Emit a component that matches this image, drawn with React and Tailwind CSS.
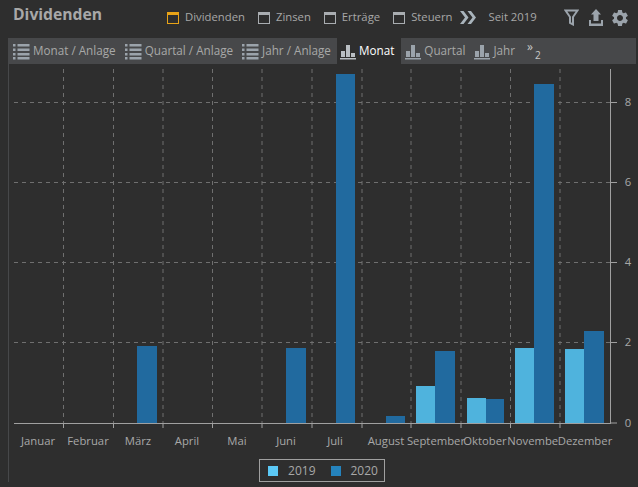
import React from 'react';
import { MdSettings } from 'react-icons/md';

const filters = [
  { label: 'Dividenden', active: true },
  { label: 'Zinsen' },
  { label: 'Erträge' },
  { label: 'Steuern' },
];

const tabs = [
  { label: 'Monat / Anlage', icon: 'list' },
  { label: 'Quartal / Anlage', icon: 'list' },
  { label: 'Jahr / Anlage', icon: 'list' },
  { label: 'Monat', icon: 'bars', active: true },
  { label: 'Quartal', icon: 'bars' },
  { label: 'Jahr', icon: 'bars' },
];

const months = ['Januar', 'Februar', 'März', 'April', 'Mai', 'Juni', 'Juli', 'August', 'September', 'Oktober', 'November', 'Dezember'];
const labelX = [38, 88, 138, 187, 237, 286, 335, 386, 436, 485, 535, 585];
const gridX = [63.5, 113.5, 163, 212.5, 262, 312, 362, 411, 461, 510.5, 560];
const tickY = [{ v: 8, y: 102 }, { v: 6, y: 182 }, { v: 4, y: 262 }, { v: 2, y: 342 }];
const BASE = 423;

// x, width, top of every bar in page pixels
const bars = [
  { x: 137, w: 20, top: 346, c: '#216a9f' },
  { x: 286, w: 20, top: 348, c: '#216a9f' },
  { x: 336, w: 19, top: 74, c: '#216a9f' },
  { x: 386, w: 19, top: 416, c: '#216a9f' },
  { x: 416, w: 19, top: 386, c: '#4fb3dd' },
  { x: 435, w: 20, top: 351, c: '#216a9f' },
  { x: 467, w: 19, top: 398, c: '#4fb3dd' },
  { x: 486, w: 18, top: 399, c: '#216a9f' },
  { x: 515, w: 19, top: 348, c: '#4fb3dd' },
  { x: 534, w: 20, top: 84, c: '#216a9f' },
  { x: 565, w: 19, top: 349, c: '#4fb3dd' },
  { x: 584, w: 20, top: 331, c: '#216a9f' },
];

function ListIcon() {
  return (
    <svg width="17" height="17" viewBox="0 0 17 17" className="shrink-0" fill="#9ba3ab">
      <rect x="0" y="1" width="2.5" height="2.5" />
      <rect x="0" y="5.5" width="2.5" height="2.5" />
      <rect x="0" y="10" width="2.5" height="2.5" />
      <rect x="0" y="14" width="2.5" height="2.5" />
      <rect x="4.5" y="1" width="12" height="2.5" />
      <rect x="4.5" y="5.5" width="12" height="2.5" />
      <rect x="4.5" y="10" width="12" height="2.5" />
      <rect x="4.5" y="14" width="12" height="2.5" />
    </svg>
  );
}

function BarsIcon({ color }) {
  return (
    <svg width="16" height="17" viewBox="0 0 16 17" className="shrink-0" fill={color}>
      <rect x="1" y="8" width="4" height="6" />
      <rect x="6" y="2" width="4" height="12" />
      <rect x="11" y="10" width="4" height="4" />
      <rect x="0" y="15" width="16" height="1.5" />
    </svg>
  );
}

function WindowBox({ active }) {
  return (
    <span className={`w-3 h-3 shrink-0 border border-solid border-t-[3px] ${active ? 'border-[#e8a317]' : 'border-[#a9adb1]'}`} />
  );
}

function Chart() {
  return (
    <svg width="638" height="388" viewBox="0 64 638 388" className="block">
      {/* grid */}
      {gridX.map(x => (
        <line key={x} x1={x} x2={x} y1="69" y2={BASE} stroke="#6f6f6f" strokeDasharray="4 4" />
      ))}
      {tickY.map(t => (
        <line key={t.v} x1="14" x2="610" y1={t.y + 0.5} y2={t.y + 0.5} stroke="#6f6f6f" strokeDasharray="4 4" />
      ))}
      {/* bars */}
      {bars.map(b => (
        <rect key={b.x} x={b.x} y={b.top} width={b.w} height={BASE - b.top} fill={b.c} />
      ))}
      {/* axes */}
      <line x1="14" x2="610" y1={BASE + 0.5} y2={BASE + 0.5} stroke="#a0a0a0" />
      <line x1="610.5" x2="610.5" y1="69" y2={BASE + 1} stroke="#a0a0a0" />
      {gridX.map(x => (
        <line key={x} x1={x} x2={x} y1={BASE} y2={BASE + 5} stroke="#a0a0a0" />
      ))}
      {[...tickY, { v: 0, y: 422.5 }].map(t => (
        <g key={t.v}>
          <line x1="610" x2="617" y1={t.y + 0.5} y2={t.y + 0.5} stroke="#a0a0a0" />
          <text x="628" y={t.y + 4} textAnchor="middle" fontSize="11.3" fill="#a8a8a8">{t.v}</text>
        </g>
      ))}
      {months.map((m, i) => (
        <g key={m}>
          {m === 'Dezember' && <rect x="559" y="432" width="52" height="18" fill="#2e2e2e" />}
          <text x={labelX[i]} y="445" textAnchor="middle" fontSize="11.3" fill="#a8a8a8">{m}</text>
        </g>
      ))}
    </svg>
  );
}

export default function App() {
  return (
    <div className="w-[638px] h-[487px] overflow-hidden bg-[#2e2e2e] text-[#a8a8a8] text-[11.3px]" style={{ fontFamily: '"Open Sans", sans-serif' }}>
      {/* header */}
      <div className="h-[38px] flex items-center pl-[13px] pb-[3px]">
        <h1 className="text-[15.7px] font-bold text-[#a8a8a8] -mt-[6px] w-[154px]">Dividenden</h1>
        <div className="flex items-center gap-[13px]">
          {filters.map(f => (
            <div key={f.label} className="flex items-center gap-[6px]">
              <WindowBox active={f.active} />
              <span>{f.label}</span>
            </div>
          ))}
        </div>
        <svg width="16" height="13" viewBox="0 0 16 13" fill="#a9b4bc" className="ml-[7px]">
          <path d="M0 0h3.5l5 6.5-5 6.5H0l5-6.5zM7.5 0H11l5 6.5-5 6.5H7.5l5-6.5z" />
        </svg>
        <span className="ml-[13px]">Seit 2019</span>
        <div className="ml-[27px] flex items-center gap-[10px]">
          <svg width="15" height="17" viewBox="0 0 15 17" fill="none" stroke="#9ba3ab" strokeWidth="2">
            <path d="M1.5 1.5h12L9 8v7.5L6 14V8z" />
          </svg>
          <svg width="14" height="17" viewBox="0 0 14 17" fill="#9ba3ab">
            <path d="M7 0L12 5.5H9.5V12h-5V5.5H2z" />
            <path d="M0 11h2v3.5h10V11h2v6H0z" />
          </svg>
          <MdSettings className="w-[20px] h-[20px] -ml-[3px] text-[#9ba3ab]" />
        </div>
      </div>

      {/* tabs */}
      <div className="h-[26px] ml-2 mr-[2px] flex items-center pl-[5px] bg-[#47484a] text-[11.7px]">
        {tabs.map(t => (
          <div key={t.label} className={`h-full flex items-center gap-[3px] ${t.active ? 'bg-[#2e2e2e] text-white pl-[3px] pr-[7px] -ml-[3px] mr-[4px]' : 'mr-[9px]'}`}>
            {t.icon === 'list' ? <ListIcon /> : <BarsIcon color={t.active ? '#b9bec3' : '#9ba3ab'} />}
            <span>{t.label}</span>
          </div>
        ))}
        <span className="relative ml-[3px] -mt-[8px] text-[12px] leading-none text-[#c8c8c8]">
          »<span className="absolute left-[8px] top-[9px] text-[10px]">2</span>
        </span>
      </div>

      {/* plot */}
      <div className="ml-2 border-l border-solid border-[#47484a]">
        <div className="-ml-[9px]">
          <Chart />
        </div>
        <div className="flex justify-center mt-[7px]">
          <div className="h-[23px] w-[126px] -ml-[4px] pl-[3px] flex items-center justify-center gap-[15px] border border-solid border-[#a0a0a0]">
            <div className="flex items-center gap-[10px]">
              <span className="w-[10px] h-[10px] bg-[#5bc8f5]" />
              <span className="text-xs">2019</span>
            </div>
            <div className="flex items-center gap-[10px]">
              <span className="w-[10px] h-[10px] bg-[#2583bd]" />
              <span className="text-xs">2020</span>
            </div>
          </div>
        </div>
      </div>
    </div>
  );
}
